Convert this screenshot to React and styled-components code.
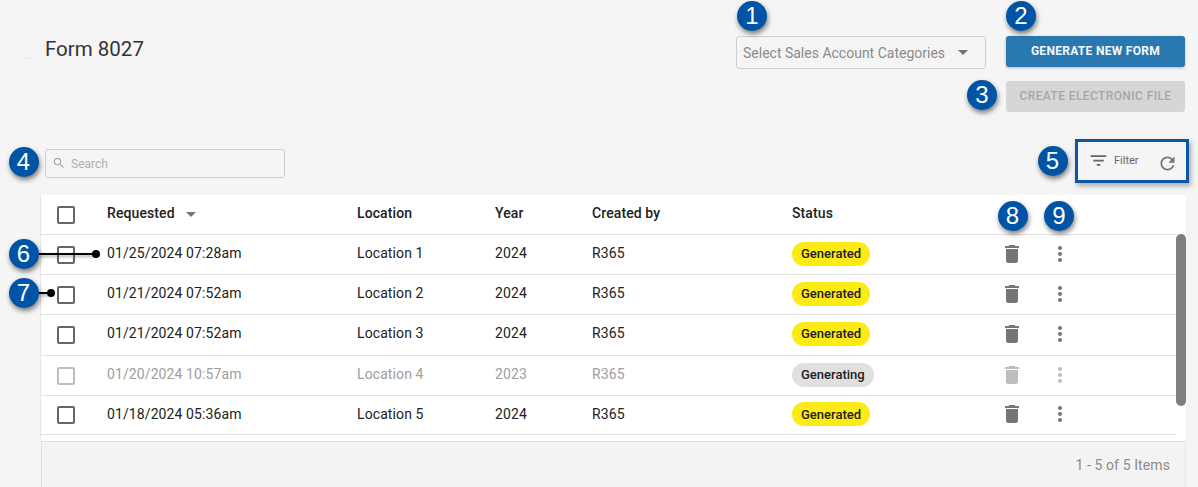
import React from "react";
import styled, { createGlobalStyle } from "styled-components";
import {
  MdDelete,
  MdFilterList,
  MdMoreVert,
  MdRefresh,
  MdSearch,
} from "react-icons/md";

const font_rb = "Roboto, 'Liberation Sans', Arial, sans-serif";

const rows = [
  { date: "01/25/2024 07:28am", location: "Location 1", year: "2024", h: 40 },
  { date: "01/21/2024 07:52am", location: "Location 2", year: "2024", h: 40 },
  { date: "01/21/2024 07:52am", location: "Location 3", year: "2024", h: 41 },
  { date: "01/20/2024 10:57am", location: "Location 4", year: "2023", h: 40, busy: true },
  { date: "01/18/2024 05:36am", location: "Location 5", year: "2024", h: 39 },
];

const callouts = [
  { n: 1, x: 752, y: 16 },
  { n: 2, x: 1021, y: 16 },
  { n: 3, x: 982, y: 95 },
  { n: 4, x: 23.5, y: 162 },
  { n: 5, x: 1052.5, y: 161 },
  { n: 6, x: 23.5, y: 254 },
  { n: 7, x: 23.5, y: 293 },
  { n: 8, x: 1012.5, y: 216 },
  { n: 9, x: 1059, y: 216 },
];

export default function App() {
  return (
    <Page>
      <GlobalStyle />
      <Header>
        <TitleWrap>
          <Dash />
          <Title>Form 8027</Title>
        </TitleWrap>
        <SelectBox>
          <span>Select Sales Account Categories</span>
          <Caret />
        </SelectBox>
        <Actions>
          <PrimaryButton>GENERATE NEW FORM</PrimaryButton>
          <DisabledButton disabled>CREATE ELECTRONIC FILE</DisabledButton>
        </Actions>
      </Header>

      <Toolbar>
        <SearchBox>
          <MdSearch size={14} color="#a8a8a8" />
          <SearchText>Search</SearchText>
        </SearchBox>
        <FilterBox>
          <FilterIcon size={21} />
          <FilterLabel>Filter</FilterLabel>
          <RefreshIcon size={21} />
        </FilterBox>
      </Toolbar>

      <TableCard>
        <HeadRow>
          <Check />
          <HeadCell>
            Requested
            <SortCaret />
          </HeadCell>
          <HeadCell>Location</HeadCell>
          <HeadCell>Year</HeadCell>
          <HeadCell>Created by</HeadCell>
          <HeadCell>Status</HeadCell>
        </HeadRow>
        {rows.map((row, i) => (
          <Row key={i} $h={row.h} $busy={row.busy}>
            <Check $busy={row.busy} />
            <TextCell>{row.date}</TextCell>
            <TextCell>{row.location}</TextCell>
            <TextCell>{row.year}</TextCell>
            <TextCell>R365</TextCell>
            <PillCell>
              <StatusPill $busy={row.busy}>
                {row.busy ? "Generating" : "Generated"}
              </StatusPill>
            </PillCell>
            <IconCell $busy={row.busy}>
              <MdDelete size={24} />
            </IconCell>
            <IconCell $busy={row.busy}>
              <MdMoreVert size={24} />
            </IconCell>
          </Row>
        ))}
        <RowGap />
        <ScrollThumb />
      </TableCard>
      <Footer>1 - 5 of 5 Items</Footer>

      {callouts.map((c) => (
        <Callout key={c.n} $x={c.x} $y={c.y}>
          {c.n}
        </Callout>
      ))}
      <Leader $y={253} $width={58} />
      <Leader $y={292} $width={13} />
    </Page>
  );
}

const GlobalStyle = createGlobalStyle`
  html, body {
    margin: 0;
    background: #f5f5f5;
  }
`;

const Page = styled.div`
  position: relative;
  width: 1198px;
  height: 487px;
  overflow: hidden;
  box-sizing: border-box;
  padding-top: 36px;
  font-family: ${font_rb};
  background: #f5f5f5;
`;

const Header = styled.div`
  display: flex;
  align-items: flex-start;
  padding-right: 13px;
`;

const TitleWrap = styled.div`
  flex: 1;
  display: flex;
  align-items: flex-start;
  padding-left: 22px;
`;

const Dash = styled.div`
  width: 8px;
  height: 2px;
  margin-top: 21px;
  background: #ececec;
`;

const Title = styled.h1`
  margin: 0 0 0 15px;
  font-size: 20.5px;
  line-height: 26px;
  font-weight: 400;
  color: #333;
`;

const SelectBox = styled.div`
  width: 250px;
  height: 33px;
  box-sizing: border-box;
  margin-right: 20px;
  padding: 0 17px 0 6px;
  display: flex;
  align-items: center;
  justify-content: space-between;
  border: 1px solid #cfcfcf;
  border-radius: 3px;
  font-size: 14px;
  color: #8a8a8a;
`;

const Caret = styled.i`
  width: 0;
  height: 0;
  border-left: 5px solid transparent;
  border-right: 5px solid transparent;
  border-top: 5px solid #757575;
`;

const SortCaret = styled(Caret)`
  margin-left: 11px;
  margin-top: 2px;
`;

const Actions = styled.div`
  width: 179px;
  display: flex;
  flex-direction: column;
  gap: 14px;
`;

const PrimaryButton = styled.button`
  height: 31px;
  padding: 0 0 1px;
  border: 0;
  border-radius: 3px;
  background: #2a78b0;
  box-shadow: 0 1px 3px rgba(0, 0, 0, 0.25);
  color: #f4f8fb;
  font-family: ${font_rb};
  font-size: 12px;
  font-weight: 700;
  letter-spacing: 0.3px;
`;

const DisabledButton = styled(PrimaryButton)`
  background: #d6d6d6;
  box-shadow: none;
  color: #a6a6a6;
  font-weight: 500;
  letter-spacing: 0.4px;
`;

const Toolbar = styled.div`
  display: flex;
  align-items: center;
  justify-content: space-between;
  margin-top: 27px;
  padding: 0 9px 0 45px;
`;

const SearchBox = styled.div`
  width: 240px;
  height: 29px;
  box-sizing: border-box;
  margin-top: 4px;
  padding-left: 6px;
  display: flex;
  align-items: center;
  gap: 5px;
  border: 1px solid #cdcdcd;
  border-radius: 3px;
  font-size: 12px;
  color: #aeaeae;
`;

const SearchText = styled.span`
  padding-top: 2px;
`;

const FilterBox = styled.div`
  width: 114px;
  height: 44px;
  box-sizing: border-box;
  padding: 0 8px 0 10px;
  display: flex;
  align-items: center;
  border: 3px solid #0b57a4;
  box-shadow: 2px 3px 5px rgba(0, 0, 0, 0.3);
`;

const FilterIcon = styled(MdFilterList)`
  margin-bottom: 2px;
  color: #666;
`;

const RefreshIcon = styled(MdRefresh)`
  margin-top: 5px;
  color: #757575;
`;

const FilterLabel = styled.span`
  flex: 1;
  margin-left: 5px;
  margin-bottom: 2px;
  font-size: 11px;
  color: #666;
`;

const TableCard = styled.div`
  position: relative;
  margin: 12px 12px 0 41px;
  background: #fff;
  box-shadow: -1px 0 0 #e6e6e6;
`;

const columns = "66px 250px 138px 97px 200px 200px 40px 56px";

const HeadRow = styled.div`
  height: 39px;
  margin-right: 9px;
  display: grid;
  grid-template-columns: ${columns};
  align-items: center;
  border-bottom: 1px solid #e0e0e0;
  font-size: 14px;
  letter-spacing: 0.1px;
  color: #212121;
`;

const HeadCell = styled.div`
  display: flex;
  align-items: center;
  margin-bottom: 3px;
  font-weight: 500;
`;

const Row = styled.div`
  height: ${(p) => p.$h}px;
  box-sizing: border-box;
  margin-right: 9px;
  padding-bottom: ${(p) => (p.$h > 40 ? 1 : 0)}px;
  display: grid;
  grid-template-columns: ${columns};
  align-items: center;
  border-bottom: 1px solid #e0e0e0;
  font-size: 14px;
  letter-spacing: 0.1px;
  color: ${(p) => (p.$busy ? "#9e9e9e" : "#212121")};
`;

const TextCell = styled.div`
  margin-bottom: 3px;
`;

const PillCell = styled.div`
  display: flex;
  margin-bottom: 2px;
`;

const RowGap = styled.div`
  height: 6px;
`;

const Check = styled.div`
  width: 18px;
  height: 18px;
  box-sizing: border-box;
  margin-left: 16px;
  border: 2px solid ${(p) => (p.$busy ? "#bdbdbd" : "#666")};
  border-radius: 2px;
`;

const StatusPill = styled.span`
  display: inline-flex;
  align-items: center;
  height: 24px;
  padding: 0 9px;
  border-radius: 12px;
  background: ${(p) => (p.$busy ? "#e0e0e0" : "#fdeb16")};
  color: #212121;
  font-size: 13px;
  font-weight: 500;
  letter-spacing: 0;
`;

const IconCell = styled.div`
  display: flex;
  justify-content: center;
  margin-bottom: 2px;
  color: ${(p) => (p.$busy ? "#bdbdbd" : "#757575")};
`;

const ScrollThumb = styled.div`
  position: absolute;
  top: 39px;
  right: 0;
  width: 10px;
  height: 172px;
  border-radius: 5px;
  background: #7f7f7f;
`;

const Footer = styled.div`
  height: 46px;
  box-sizing: border-box;
  margin: 0 12px 0 41px;
  padding-right: 15px;
  display: flex;
  align-items: center;
  justify-content: flex-end;
  border-top: 1px solid #dedede;
  border-left: 1px solid #dedede;
  border-right: 1px solid #e8e8e8;
  background: #f3f3f3;
  font-size: 14px;
  letter-spacing: 0.1px;
  color: #8c8c8c;
`;

const Callout = styled.div`
  position: absolute;
  left: ${(p) => p.$x - 15}px;
  top: ${(p) => p.$y - 15}px;
  z-index: 2;
  width: 30px;
  height: 30px;
  display: flex;
  align-items: center;
  justify-content: center;
  border-radius: 50%;
  background: #0054a6;
  box-shadow: 1px 3px 5px rgba(0, 0, 0, 0.5);
  color: #fff;
  font-family: "Liberation Sans", Arial, sans-serif;
  font-size: 24px;
`;

const Leader = styled.div`
  position: absolute;
  left: 38px;
  top: ${(p) => p.$y}px;
  z-index: 1;
  width: ${(p) => p.$width}px;
  height: 2px;
  background: #000;
  box-shadow: 1px 2px 3px rgba(0, 0, 0, 0.35);

  &::after {
    content: "";
    position: absolute;
    right: -4px;
    top: -3px;
    width: 8px;
    height: 8px;
    border-radius: 50%;
    background: #000;
  }
`;
